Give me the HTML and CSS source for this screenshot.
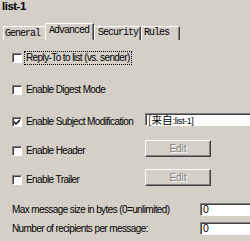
FILE: index.html
```html
<!DOCTYPE html>
<html lang="en">
<head>
	<meta charset="UTF-8">
	<title>list-1</title>
	<link rel="stylesheet" href="styles.css">
</head>
<body>
	<div class="title">list-1</div>

	<div class="tabs">
		<div class="tab tab-general">General</div>
		<div class="tab tab-active">Advanced</div>
		<div class="tab tab-security">Security</div>
		<div class="tab tab-rules">Rules</div>
	</div>

	<div class="panel">
		<div class="row row-reply">
			<div class="left">
				<span class="check"></span>
				<span class="label focus">Reply-To to list (vs. sender)</span>
			</div>
		</div>

		<div class="row row-digest">
			<div class="left">
				<span class="check"></span>
				<span class="label">Enable Digest Mode</span>
			</div>
		</div>

		<div class="row row-subject">
			<div class="left">
				<span class="check checked">
					<svg width="8" height="8" viewBox="0 0 8 8"><path d="M1 3 L3 5 L7 1 L7 3 L3 7 L1 5 Z" fill="#000"/></svg>
				</span>
				<span class="label">Enable Subject Modification</span>
			</div>
			<div class="field field-subject"><span class="cjk">[来自</span>:list-1]</div>
		</div>

		<div class="row row-header">
			<div class="left">
				<span class="check"></span>
				<span class="label">Enable Header</span>
			</div>
			<div class="button">Edit</div>
		</div>

		<div class="row row-trailer">
			<div class="left">
				<span class="check"></span>
				<span class="label">Enable Trailer</span>
			</div>
			<div class="button">Edit</div>
		</div>

		<div class="row row-size">
			<div class="left wide">
				<span class="label">Max message size in bytes (0=unlimited)</span>
			</div>
			<div class="field field-num">0</div>
		</div>

		<div class="row row-recipients">
			<div class="left wide">
				<span class="label">Number of recipients per message:</span>
			</div>
			<div class="field field-num">0</div>
		</div>
	</div>
</body>
</html>
```

FILE: styles.css
```css
* {
	margin: 0;
	padding: 0;
	box-sizing: border-box;
}

body {
	width: 250px;
	height: 241px;
	overflow: hidden;
	background: #d4d0c8;
	color: #000;
	font-family: "Liberation Sans", Arial, sans-serif;
	font-size: 10px;
}

.title {
	height: 22px;
	padding: 0 0 0 2px;
	font-size: 11.5px;
	font-weight: bold;
	letter-spacing: -0.5px;
	line-height: 13px;
}

/* tab strip */
.tabs {
	display: flex;
	align-items: flex-end;
	height: 18px;
	padding-left: 3px;
}

.tab {
	flex-shrink: 0;
	height: 14px;
	border-top: 1px solid #fff;
	border-left: 1px solid #fff;
	font-family: "Liberation Mono", "Courier New", monospace;
	font-size: 10px;
	letter-spacing: -1px;
	line-height: 12px;
	color: #000;
}

.tab-general {
	width: 42px;
	padding-left: 1px;
	padding-top: 1px;
}

.tab-active {
	height: 17px;
	width: 49px;
	padding-left: 3px;
	padding-top: 1px;
	border-right: 1px solid #404040;
	box-shadow: inset -1px 0 #808080;
}

.tab-security {
	width: 47px;
	padding-left: 3px;
	border-right: 1px solid #404040;
	box-shadow: inset -1px 0 #808080;
}

.tab-rules {
	width: 39px;
	padding-left: 2px;
	border-right: 1px solid #404040;
	box-shadow: inset -1px 0 #808080;
}

/* page body */
.panel {
	display: flex;
	flex-direction: column;
	padding-top: 6px;
	padding-left: 12px;
}

.row {
	display: flex;
	align-items: center;
	height: 24px;
}

.row-digest,
.row-subject {
	margin-top: 8px;
}

.row-header,
.row-trailer {
	margin-top: 5px;
}

.row-size {
	height: 13px;
	margin-top: 11px;
}

.row-recipients {
	height: 13px;
	margin-top: 6px;
}

.left {
	display: flex;
	align-items: center;
	flex-shrink: 0;
	width: 133px;
	white-space: nowrap;
}

.left.wide {
	width: 188px;
}

.check {
	display: flex;
	align-items: center;
	justify-content: center;
	flex-shrink: 0;
	width: 10px;
	height: 10px;
	margin-right: 4px;
	background: #fff;
	border: 1px solid;
	border-color: #808080 #fff #fff #808080;
	box-shadow: inset 1px 1px #404040;
}

.label {
	letter-spacing: -0.6px;
	line-height: 12px;
}

.focus {
	outline: 1px dotted #000;
	outline-offset: 0;
	padding: 0 1px;
	margin-left: -1px;
}

.field {
	flex-shrink: 0;
	height: 13px;
	background: #fff;
	border: 1px solid;
	border-color: #808080 #fff #fff #808080;
	box-shadow: inset 1px 1px #404040;
	padding-left: 2px;
	line-height: 11px;
	white-space: nowrap;
}

.field-subject {
	width: 110px;
	margin-top: -5px;
	font-size: 9px;
	letter-spacing: -0.4px;
}

.cjk {
	font-family: "Noto Sans CJK SC", sans-serif;
	font-size: 10.5px;
	letter-spacing: 0;
}

.field-num {
	width: 52px;
	font-size: 10.5px;
}

.button {
	flex-shrink: 0;
	width: 66px;
	height: 17px;
	margin-top: -5px;
	border: 1px solid;
	border-color: #fff #404040 #404040 #fff;
	box-shadow: inset -1px -1px #808080;
	text-align: center;
	line-height: 15px;
	color: #808080;
	text-shadow: 1px 1px #fff;
}
```
